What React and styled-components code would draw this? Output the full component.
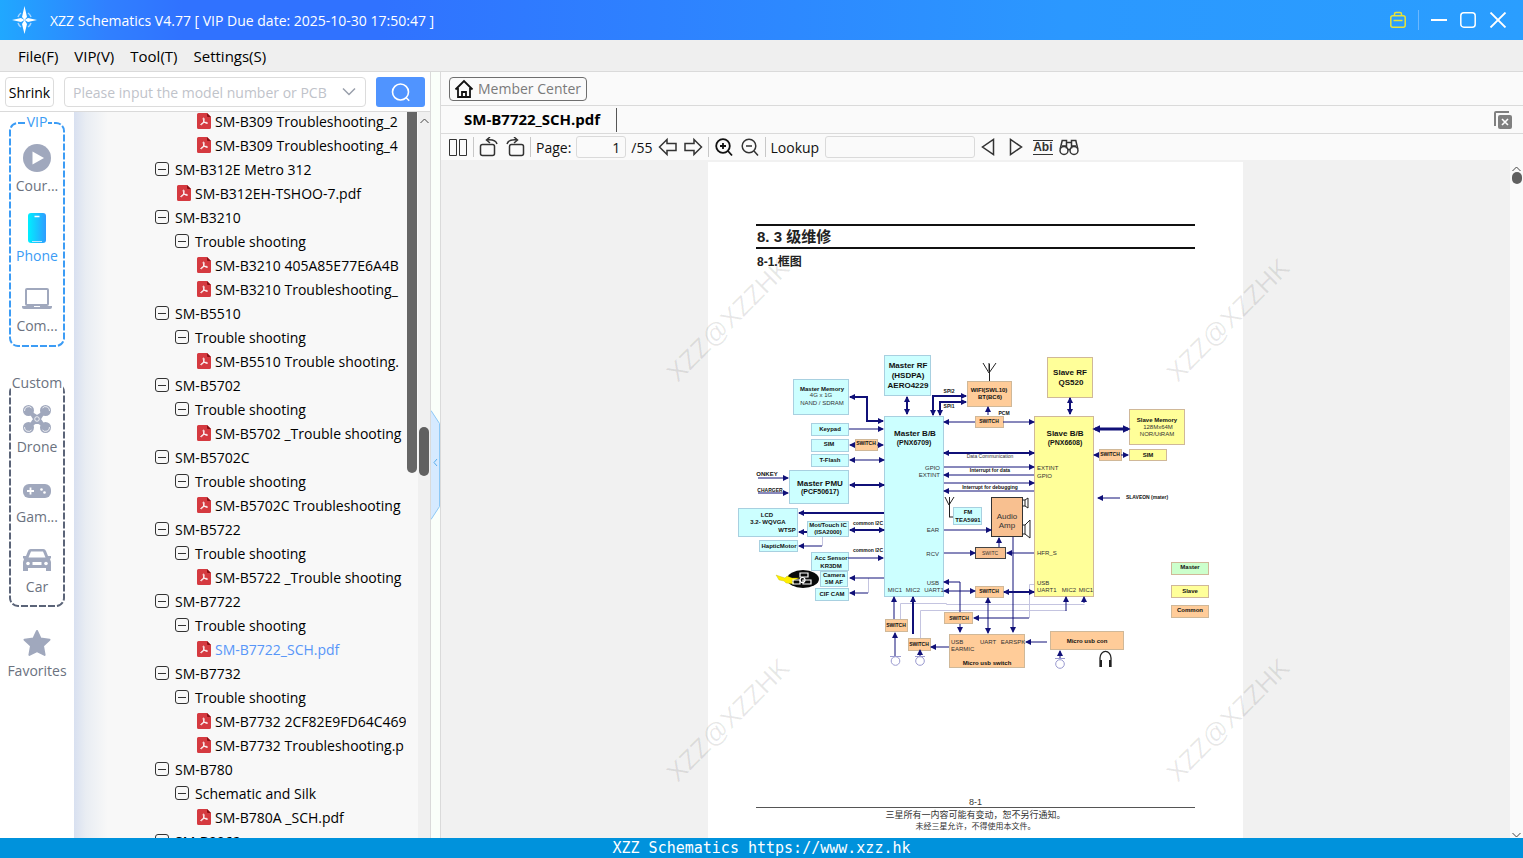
import { useState } from "react";

import styled, { createGlobalStyle } from "styled-components";


const GlobalStyle = createGlobalStyle`
	* { box-sizing:border-box; }
	body {
		margin:0;
		overflow:hidden;
		font-family:"Open Sans", "Noto Sans", "Noto Sans CJK SC", sans-serif;
		font-size:14px;
		color:#000;
		background:#fff;
	}
	button, input {
		font-family:inherit;
		font-size:inherit;
		color:inherit;
		margin:0;
	}
	button { cursor:pointer; }
	svg { display:block; flex:none; }
`;

const Window = styled.div`
	display:flex;
	flex-direction:column;
	height:100vh;
`;

const TitleBar = styled.header`
	display:flex;
	align-items:center;
	height:40px;
	flex:none;
	padding:0 16px 0 11px;
	color:#fff;
	background:linear-gradient(90deg, #20a8ff 0, #3080ff 7%, #3072ff 12%, #3072ff 25%, #2b98ff 70%, #2a9eff 100%);
`;

const Title = styled.h1`
	flex:1;
	margin:0 0 0 12px;
	font-size:14px;
	font-weight:400;
	white-space:nowrap;
`;

const WindowButtons = styled.div`
	display:flex;
	align-items:center;
	gap:12px;
`;

const WindowDivider = styled.span`
	width:1px;
	height:20px;
	background:#6bb8ff;
`;

const IconButton = styled.button`
	display:flex;
	align-items:center;
	justify-content:center;
	padding:0;
	border:none;
	background:none;
`;

const MenuBar = styled.nav`
	display:flex;
	align-items:center;
	gap:16px;
	height:32px;
	flex:none;
	padding:0 18px;
	background:#efefef;
	border-bottom:1px solid #dadada;
`;

const MenuItem = styled.button`
	padding:0;
	border:none;
	background:none;
	font-size:15px;
`;

const Main = styled.div`
	display:flex;
	flex:1;
	min-height:0;
`;

const LeftPanel = styled.div`
	display:flex;
	flex-direction:column;
	width:431px;
	flex:none;
	border-right:1px solid #dadada;
`;

const SearchRow = styled.form`
	display:flex;
	align-items:center;
	height:40px;
	flex:none;
	padding:0 5px;
	gap:10px;
	border-bottom:1px solid #dadada;
`;

const ShrinkButton = styled.button`
	width:49px;
	height:30px;
	padding:2px 0 0;
	border:1px solid #dcdcdc;
	border-radius:4px;
	background:#fff;
`;

const SearchBox = styled.div`
	display:flex;
	align-items:center;
	flex:1;
	height:30px;
	padding:0 9px 0 8px;
	border:1px solid #dcdcdc;
	border-radius:4px;
`;

const SearchInput = styled.input`
	flex:1;
	min-width:0;
	padding:2px 0 0;
	border:none;
	outline:none;
	background:none;
	&::placeholder { color:#bfc3ca; }
`;

const SearchButton = styled.button`
	display:flex;
	align-items:center;
	justify-content:center;
	width:49px;
	height:30px;
	padding:0;
	border:none;
	border-radius:3px;
	background:#5094ff;
`;

const LeftBody = styled.div`
	display:flex;
	flex:1;
	min-height:0;
`;

const SideBar = styled.div`
	display:flex;
	flex-direction:column;
	align-items:center;
	width:74px;
	flex:none;
	padding-top:10px;
`;

const SideGroup = styled.section`
	display:flex;
	flex-direction:column;
	align-items:center;
	position:relative;
	width:56px;
	height:225px;
	margin-bottom:${props => props.$gap}px;
	padding-top:12px;
	color:${props => props.$color};
`;

const SideFrame = styled.svg`
	position:absolute;
	inset:0;
	width:100%;
	height:100%;
`;

const SideLegend = styled.h2`
	position:absolute;
	top:-10px;
	margin:0;
	padding:0 1px;
	font-size:14px;
	font-weight:400;
	line-height:20px;
	background:#fff;
`;

const SideItem = styled.button`
	display:flex;
	flex-direction:column;
	align-items:center;
	gap:3px;
	height:70px;
	flex:none;
	padding:9px 0 0;
	border:none;
	background:none;
	position:relative;
	color:${props => props.$active ? "#3c9cf5" : "#6b7280"};
	line-height:20px;
`;

const TreePane = styled.div`
	flex:1;
	min-width:0;
	overflow:hidden;
	background:linear-gradient(90deg, #d8e0f0 0, #e9edf3 12px, #f8f8f8 34px);
`;

const Tree = styled.ul`
	margin:-3px 0 0;
	padding:0 0 0 81px;
	list-style:none;
`;

const TreeRow = styled.li`
	display:flex;
	align-items:center;
	height:24px;
	padding-left:${props => props.$level * 20}px;
	color:${props => props.$selected ? "#5796f8" : "#000"};
	white-space:nowrap;
`;

const TreeIcon = styled.span`
	display:flex;
	width:20px;
	flex:none;
	padding-left:${props => props.$file ? 2 : 0}px;
`;

const TreeName = styled.button`
	padding:0;
	border:none;
	background:none;
`;

const InnerScroll = styled.div`
	width:12px;
	padding-left:1px;
	flex:none;
	background:#f8f8f8;
`;

const InnerThumb = styled.div`
	width:10px;
	height:361px;
	border-radius:0 0 5px 5px;
	background:#666;
`;

const OuterScroll = styled.div`
	display:flex;
	flex-direction:column;
	align-items:center;
	gap:303px;
	width:12px;
	padding-top:6px;
	flex:none;
	background:#f0f0f0;
`;

const OuterThumb = styled.div`
	width:10px;
	height:49px;
	border-radius:5px;
	background:#606060;
`;

const Splitter = styled.div`
	display:flex;
	align-items:center;
	width:10px;
	flex:none;
	padding-top:20px;
	background:#fafffa;
	border-right:1px solid #dadada;
`;

const RightPanel = styled.div`
	display:flex;
	flex-direction:column;
	flex:1;
	min-width:0;
	background:#fafafa;
`;

const MemberRow = styled.div`
	display:flex;
	align-items:center;
	height:34px;
	flex:none;
	padding-left:8px;
	border-bottom:1px solid #dadada;
`;

const MemberButton = styled.button`
	display:flex;
	align-items:center;
	gap:4px;
	height:24px;
	padding:0 5px 0 4px;
	border:1px solid #6e6e6e;
	border-radius:4px;
	background:#fafafa;
	color:#7a7a7a;
`;

const TabRow = styled.div`
	display:flex;
	align-items:center;
	justify-content:space-between;
	height:28px;
	flex:none;
	padding-right:11px;
	border-bottom:1px solid #dadada;
`;

const Tab = styled.button`
	height:24px;
	padding:0 16px 2px 23px;
	border:none;
	border-right:1px solid #555;
	background:none;
	font-size:15px;
	font-weight:700;
`;

const ToolRow = styled.div`
	display:flex;
	align-items:center;
	height:26px;
	flex:none;
	padding-left:7px;
	color:#111;
`;

const ToolGroup = styled.div`
	display:flex;
	align-items:center;
	gap:${props => props.$gap}px;
`;

const ToolDivider = styled.span`
	width:1px;
	height:20px;
	margin:0 5px;
	background:#c8c8c8;
`;

const ToolInput = styled.input`
	width:${props => props.$width}px;
	height:22px;
	padding:0 5px;
	border:1px solid #dadada;
	border-radius:3px;
	background:#fafafa;
	text-align:right;
`;

const Abi = styled.span`
	border-top:1px solid #333;
	border-bottom:1px solid #333;
	font:700 12px/13px "Liberation Sans", Arial, sans-serif;
	color:#333;
`;

const Viewer = styled.div`
	display:flex;
	flex:1;
	min-height:0;
`;

const Canvas = styled.div`
	display:flex;
	justify-content:center;
	flex:1;
	padding-top:2px;
	overflow:hidden;
	background:#f1f1f1;
`;

const Page = styled.article`
	position:relative;
	width:535px;
	flex:none;
	padding:62px 48px 0;
	background:#fff;
	font-family:"Liberation Sans", "Noto Sans CJK SC", sans-serif;
`;

const PageHeading = styled.h2`
	margin:0;
	padding:0 1px;
	border-top:2px solid #111;
	border-bottom:2px solid #111;
	font-size:15px;
	line-height:21px;
	color:#222;
`;

const PageSubHeading = styled.h3`
	margin:4px 1px 0;
	font-size:12px;
	line-height:18px;
	color:#222;
`;

const Diagram = styled.svg`
	width:535px;
	margin:79px -48px 0;
	font-family:"Liberation Sans", Arial, sans-serif;
`;

const PageFooter = styled.footer`
	margin-top:117px;
	text-align:center;
	color:#333;
	font-size:9px;
	line-height:10px;
`;

const PageNotice = styled.p`
	margin:0;
	padding-top:1px;
	border-top:${props => props.$first ? "1px solid #555" : "none"};
	font-size:${props => props.$first ? 9 : 8}px;
	line-height:${props => props.$first ? 11 : 9}px;
	font-family:"Noto Sans CJK SC", sans-serif;
`;

/* laid over the page and the grey desk around it */
const Watermark = styled.span`
	position:absolute;
	left:${props => props.$x}px;
	top:${props => props.$y}px;
	width:180px;
	line-height:30px;
	margin:-15px 0 0 -90px;
	text-align:center;
	font-size:26px;
	color:rgba(0, 0, 0, .09);
	transform:rotate(-45deg);
	pointer-events:none;
`;

const ViewScroll = styled.div`
	display:flex;
	flex-direction:column;
	align-items:center;
	justify-content:space-between;
	width:13px;
	flex:none;
	padding:6px 0 0;
	background:#fafafa;
`;

const ViewThumb = styled.div`
	width:10px;
	height:12px;
	border-radius:5px;
	background:#606060;
`;

const StatusBar = styled.footer`
	height:20px;
	flex:none;
	background:#0092dc;
	color:#fff;
	text-align:center;
	font:15px/20px "DejaVu Sans Mono", monospace;
`;


const TREE = [
	[2, "pdf", "SM-B309 Troubleshooting_2"],
	[2, "pdf", "SM-B309 Troubleshooting_4"],
	[0, "dir", "SM-B312E Metro 312"],
	[1, "pdf", "SM-B312EH-TSHOO-7.pdf"],
	[0, "dir", "SM-B3210"],
	[1, "dir", "Trouble shooting"],
	[2, "pdf", "SM-B3210 405A85E77E6A4B"],
	[2, "pdf", "SM-B3210 Troubleshooting_"],
	[0, "dir", "SM-B5510"],
	[1, "dir", "Trouble shooting"],
	[2, "pdf", "SM-B5510 Trouble shooting."],
	[0, "dir", "SM-B5702"],
	[1, "dir", "Trouble shooting"],
	[2, "pdf", "SM-B5702 _Trouble shooting"],
	[0, "dir", "SM-B5702C"],
	[1, "dir", "Trouble shooting"],
	[2, "pdf", "SM-B5702C Troubleshooting"],
	[0, "dir", "SM-B5722"],
	[1, "dir", "Trouble shooting"],
	[2, "pdf", "SM-B5722 _Trouble shooting"],
	[0, "dir", "SM-B7722"],
	[1, "dir", "Trouble shooting"],
	[2, "pdf", "SM-B7722_SCH.pdf"],
	[0, "dir", "SM-B7732"],
	[1, "dir", "Trouble shooting"],
	[2, "pdf", "SM-B7732 2CF82E9FD64C469"],
	[2, "pdf", "SM-B7732 Troubleshooting.p"],
	[0, "dir", "SM-B780"],
	[1, "dir", "Schematic and Silk"],
	[2, "pdf", "SM-B780A _SCH.pdf"],
	[0, "dir", "SM-B9062"],
];

const CYAN = "#ccffff";
const YELLOW = "#ffff99";
const ORANGE = "#ffcc99";

// x, y, width, height, fill
const BOXES = [
	[884, 355, 46, 40, CYAN],
	[793, 379, 55, 35, CYAN],
	[811, 423, 37, 12, CYAN],
	[811, 439, 37, 12, CYAN],
	[811, 454, 37, 12, CYAN],
	[789, 470, 59, 33, CYAN],
	[738, 508, 59, 28, CYAN],
	[807, 521, 41, 15, CYAN],
	[759, 540, 38, 11, CYAN],
	[811, 552, 37, 18, CYAN],
	[820, 571, 27, 15, CYAN],
	[815, 588, 33, 12, CYAN],
	[884, 416, 59, 180, CYAN],
	[953, 507, 28, 17, CYAN],
	[1034, 416, 59, 180, YELLOW],
	[1047, 357, 45, 40, YELLOW],
	[1129, 409, 55, 35, YELLOW],
	[1129, 449, 37, 11, YELLOW],
	[855, 439, 22, 11, ORANGE],
	[1099, 449, 22, 11, ORANGE],
	[967, 381, 44, 25, ORANGE],
	[975, 416, 28, 11, ORANGE],
	[975, 586, 28, 11, ORANGE],
	[944, 612, 28, 11, ORANGE],
	[885, 619, 22, 12, ORANGE],
	[908, 638, 22, 12, ORANGE],
	[949, 634, 75, 33, ORANGE],
	[1050, 631, 73, 18, ORANGE],
	[1171, 562, 37, 12, "#ccffcc"],
	[1171, 585, 37, 12, YELLOW],
	[1171, 605, 37, 12, ORANGE],
];

// x, baseline, text, size, bold, anchor
const LABELS = [
	[908, 368, "Master RF", 8, 1],
	[908, 378, "(HSDPA)", 8, 1],
	[908, 388, "AERO4229", 8, 1],
	[822, 391, "Master Memory", 6, 1],
	[821, 397, "4G x 1G", 6, 0],
	[822, 405, "NAND / SDRAM", 6, 0],
	[830, 431, "Keypad", 6, 1],
	[829, 446, "SIM", 6, 1],
	[830, 462, "T-Flash", 6, 1],
	[866, 445, "SWITCH", 5, 1],
	[820, 486, "Master PMU", 8, 1],
	[820, 494, "(PCF50617)", 7, 1],
	[767, 517, "LCD", 6, 1],
	[768, 524, "3.2- WQVGA", 6, 1],
	[787, 532, "WTSP", 6, 1],
	[828, 527, "Mot/Touch IC", 6, 1],
	[828, 534, "(ISA2000)", 6, 1],
	[779, 548, "HapticMotor", 6, 1],
	[831, 560, "Acc Sensor", 6, 1],
	[831, 568, "KR3DM", 6, 1],
	[834, 577, "Camera", 6, 1],
	[834, 584, "5M AF", 6, 1],
	[832, 596, "CIF CAM", 6, 1],
	[868, 525, "common I2C", 5, 1],
	[868, 552, "common I2C", 5, 1],
	[767, 476, "ONKEY", 6, 1],
	[770, 492, "CHARGER", 5, 1],
	[915, 436, "Master B/B", 8, 1],
	[914, 445, "(PNX6709)", 7, 1],
	[940, 470, "GPIO", 6, 0, "end"],
	[940, 477, "EXTINT", 6, 0, "end"],
	[939, 532, "EAR", 6, 0, "end"],
	[939, 556, "RCV", 6, 0, "end"],
	[939, 585, "USB", 6, 0, "end"],
	[895, 592, "MIC1", 6, 0],
	[913, 592, "MIC2", 6, 0],
	[934, 592, "UART1", 6, 0],
	[949, 393, "SPI2", 5, 1],
	[949, 408, "SPI1", 5, 1],
	[989, 392, "WIFI(SWL10)", 6, 1],
	[990, 399, "BT(BC6)", 6, 1],
	[1004, 415, "PCM", 5, 1],
	[989, 423, "SWITCH", 5, 1],
	[990, 458, "Data Communication", 5, 0],
	[990, 472, "Interrupt for data", 5, 1],
	[990, 489, "Interrupt for debugging", 5, 1],
	[968, 514, "FM", 6, 1],
	[968, 522, "TEA5991", 6, 1],
	[1007, 519, "Audio", 8, 0],
	[1007, 528, "Amp", 8, 0],
	[990, 555, "SWITC", 5, 0],
	[989, 593, "SWITCH", 5, 1],
	[959, 620, "SWITCH", 5, 1],
	[896, 627, "SWITCH", 5, 1],
	[919, 646, "SWITCH", 5, 1],
	[1070, 375, "Slave RF", 8, 1],
	[1071, 385, "QS520", 8, 1],
	[1065, 436, "Slave B/B", 8, 1],
	[1065, 445, "(PNX6608)", 7, 1],
	[1037, 470, "EXTINT", 6, 0, "start"],
	[1037, 478, "GPIO", 6, 0, "start"],
	[1037, 555, "HFR_S", 6, 0, "start"],
	[1037, 585, "USB", 6, 0, "start"],
	[1037, 592, "UART1", 6, 0, "start"],
	[1069, 592, "MIC2", 6, 0],
	[1086, 592, "MIC1", 6, 0],
	[1157, 422, "Slave Memory", 6, 1],
	[1158, 429, "128Mx64M", 6, 0],
	[1157, 436, "NOR/UtRAM", 6, 0],
	[1110, 456, "SWITCH", 5, 1],
	[1148, 457, "SIM", 6, 1],
	[1147, 499, "SLAVEON (mater)", 5, 1],
	[951, 644, "USB", 6, 0, "start"],
	[951, 651, "EARMIC", 6, 0, "start"],
	[988, 644, "UART", 6, 0],
	[1013, 644, "EARSPK", 6, 0],
	[987, 665, "Micro usb switch", 6, 1],
	[1087, 643, "Micro usb con", 6, 1],
	[1190, 569, "Master", 6, 1],
	[1190, 593, "Slave", 6, 1],
	[1190, 612, "Common", 6, 1],
];

// points, heads (s = start, e = end), stroke width
const WIRES = [
	["907,397 907,414", "se", 2],
	["850,397 867,397 867,421 883,421", "se", 2],
	["849,429 883,429", "e", 1],
	["850,445 855,445", "s", 1],
	["877,445 883,445", "e", 1],
	["850,460 884,460", "se", 1],
	["758,478 788,478", "e", 1],
	["758,493 788,493", "e", 1],
	["850,485 884,485", "se", 2],
	["799,513 884,513", "s", 2],
	["799,532 807,532", "s", 2],
	["850,530 884,530", "se", 2],
	["799,546 822,546", "s", 1],
	["848,558 883,558", "e", 1],
	["850,578 884,578", "s", 1],
	["850,593 868,593", "s", 1],
	["933,415 933,396 966,396", "se", 2],
	["940,415 940,402 966,402", "se", 2],
	["988,415 988,407", "e", 1],
	["944,422 975,422", "s", 1],
	["1003,422 1034,422", "e", 1],
	["944,453 1034,453", "se", 2],
	["944,467 1034,467", "e", 1],
	["944,475 1034,475", "s", 1],
	["944,483 1034,483", "e", 1],
	["944,491 1034,491", "s", 1],
	["944,530 991,530", "e", 1],
	["944,553 975,553", "e", 1],
	["1007,553 1034,553", "s", 1],
	["999,547 999,538", "e", 1],
	["1013,537 1013,632", "e", 1],
	["944,582 960,582 960,612", "s", 1],
	["960,624 960,632", "e", 1],
	["944,591 975,591", "se", 1],
	["1004,592 1034,592", "se", 2],
	["988,598 988,633", "se", 1],
	["974,618 1029,618", "s", 1],
	["1026,642 1047,642", "s", 1],
	["931,647 949,647", "s", 1],
	["894,619 894,597", "e", 1],
	["913,634 913,597", "e", 2],
	["895,656 895,633", "e", 1],
	["920,656 920,650", "e", 1],
	["1070,398 1070,414", "se", 2],
	["1095,429 1128,429", "se", 3],
	["1094,455 1099,455", "s", 1],
	["1121,455 1128,455", "e", 1],
	["1098,498 1120,498", "s", 1],
	["1066,611 1066,597", "e", 1],
	["1084,603 1084,597", "e", 1],
	["1060,658 1060,651", "e", 1],
];

const BlockDiagram = () => (
	<Diagram viewBox="708 350 535 330" role="img" aria-label="Block diagram">
		<defs>
			<marker id="head" viewBox="0 0 6 6" refX="5" refY="3" markerWidth="6" markerHeight="6" markerUnits="userSpaceOnUse" orient="auto-start-reverse">
				<path d="M0 0 6 3 0 6z" fill="#101078" />
			</marker>
			<marker id="bighead" viewBox="0 0 6 6" refX="4" refY="3" markerWidth="8" markerHeight="8" markerUnits="userSpaceOnUse" orient="auto-start-reverse">
				<path d="M0 0 6 3 0 6z" fill="#101078" />
			</marker>
		</defs>
		<g fill="none" stroke="#c4c4e0" strokeWidth="1">
			<path d="M868.500 578v15M822.500 537v9M900.500 619v-15.500h46v1h138M920.500 638v-27.500h146M1029.500 618v-33.500h5" />
		</g>
		{BOXES.map(([x, y, w, h, fill]) => (
			<rect key={x + "-" + y} x={x + .5} y={y + .5} width={w} height={h} fill={fill} stroke={fill === CYAN ? "#a8d0e0" : "#d0b898"} />
		))}
		<rect x="991.5" y="497.5" width="31" height="39" fill="#f8c090" stroke="#333" />
		<rect x="975.5" y="547.5" width="30" height="11" fill="#f8c090" stroke="#444" />
		{WIRES.map(([points, heads, width]) => (
			<polyline
				key={points}
				points={points}
				fill="none"
				stroke="#101078"
				strokeWidth={width}
				markerStart={heads.includes("s") ? `url(#${width > 2 ? "bighead" : "head"})` : undefined}
				markerEnd={heads.includes("e") ? `url(#${width > 2 ? "bighead" : "head"})` : undefined}
			/>
		))}
		<g fill="none" stroke="#222" strokeWidth="1">
			<path d="M989.500 381v-17M983 363l6 10 7-10M989 363v8M949.500 517v-20M945 497l4 8 5-8M949 517h4" />
			<path d="M1022 500h3v6h-3M1025 500l3-2v10l-3-2M1022 525h3v9h-3M1025 525l5-5v18l-5-4" />
			<path d="M1100 667v-9a5 6 0 0 1 11 0v9" strokeWidth="1.300" />
			<path d="M1101 660v7M1110 660v7" strokeWidth="2" />
		</g>
		<g fill="#fff" stroke="#9a9ad0" strokeWidth="1">
			<path d="M890 656.500h11M915 656.500h10M1055 658.500h10" />
			<circle cx="895.500" cy="661" r="4.300" />
			<circle cx="920" cy="661" r="4.300" />
			<circle cx="1060" cy="664" r="4.300" />
		</g>
		<ellipse cx="803" cy="579" rx="16" ry="9" fill="#0a0a0a" />
		<path d="M776 575l9 3 2-2 5 2 7 0-7 3 2 3-8-1-2-2-5-1z" fill="#ffee00" stroke="#aa0" strokeWidth=".3" />
		<g fill="none" stroke="#fff" strokeWidth="1.200">
			<path d="M800 573h8v4h-8zM793 580h7v4h-7zM803 580h8v4h-8z" />
			<circle cx="802.500" cy="580" r="2.500" />
		</g>
		{LABELS.map(([x, y, text, size, bold, anchor]) => (
			<text key={x + "-" + y} x={x} y={y} fontSize={size} fontWeight={bold ? 700 : 400} textAnchor={anchor || "middle"} fill={bold ? "#111" : "#333"}>{text}</text>
		))}
	</Diagram>
);

const Logo = () => (
	<svg width="27" height="30" viewBox="0 0 27 30">
		<path d="M13.500 1l2.500 11-2.500 3-2.500-3zM13.500 29l2.500-10-2.500-4-2.500 4z" fill="#fff" />
		<path d="M1 15l9-2 3.500 2-3.500 2zM26 15l-9-2-3.500 2 3.500 2z" fill="#fff" />
		<path d="M7 12a8 8 0 0 1 3-4M17 8a8 8 0 0 1 3 4M20 18a8 8 0 0 1-3 4M10 22a8 8 0 0 1-3-4" fill="none" stroke="#a9d6ff" strokeWidth="1.500" />
	</svg>
);

const PdfIcon = () => (
	<svg width="14" height="16" viewBox="0 0 14 16">
		<path d="M1.500 0H10l4 4v10.500a1.500 1.500 0 0 1-1.500 1.500h-11A1.500 1.500 0 0 1 0 14.500v-13A1.500 1.500 0 0 1 1.500 0z" fill="#d53a40" />
		<path d="M10 0l4 4h-3a1 1 0 0 1-1-1z" fill="#8a1014" />
		<path d="M6.500 5c1 0 .8 2 0 4-.7 1.500-1.700 3-2.500 3-.8-.6.500-1.800 2.500-2.300 1.800-.5 3.800-.6 4 .2.200 1-2.200.5-3.200-1-.9-1.500-1.500-3.900-.8-3.900z" fill="none" stroke="#fff" strokeWidth="1" />
	</svg>
);

const FolderIcon = () => (
	<svg width="14" height="14" viewBox="0 0 14 14" fill="none" stroke="#333">
		<rect x=".5" y=".5" width="13" height="13" rx="2.500" />
		<path d="M3 7.500h8" />
	</svg>
);

const Up = () => (
	<svg width="9" height="6" viewBox="0 0 9 6" fill="none" stroke="#444"><path d="M.5 5l4-4 4 4" /></svg>
);

const SIDE_ICONS = {
	play: (
		<g>
			<circle cx="15" cy="15" r="14" fill="#a0a8bd" />
			<path d="M10.500 8.500v13L22 15z" fill="#fff" />
		</g>
	),
	phone: (
		<g>
			<defs>
				<linearGradient id="phone"><stop stopColor="#00efff" /><stop offset="1" stopColor="#2f9cff" /></linearGradient>
			</defs>
			<rect x="6" width="18" height="30" rx="3" fill="url(#phone)" />
			<path d="M12.500 3.500h5" stroke="#fff" strokeWidth="1.500" />
			<path d="M10 28.500h10" stroke="#bfe8ff" />
		</g>
	),
	laptop: (
		<g>
			<rect x="4" y="6" width="22" height="16" rx="1" fill="none" stroke="#a0a8bd" strokeWidth="2" />
			<path d="M0 23h30v1a2 2 0 0 1-2 2H2a2 2 0 0 1-2-2z" fill="#a0a8bd" />
			<path d="M12 23.500h6" stroke="#fff" />
		</g>
	),
	drone: (
		<g transform="translate(1 1)">
			<path d="M6 6l8 5 8-5-5 8 5 8-8-5-8 5 5-8z" fill="#a0a8bd" stroke="#a0a8bd" strokeWidth="2" strokeLinejoin="round" />
			<g fill="#a0a8bd"><circle cx="5.500" cy="5.500" r="5.500" /><circle cx="22.500" cy="5.500" r="5.500" /><circle cx="5.500" cy="22.500" r="5.500" /><circle cx="22.500" cy="22.500" r="5.500" /></g>
			<g fill="none" stroke="#fff" strokeWidth=".8">
				<path d="M1.500 6a4 4 0 0 1 7-3M26.500 6a4 4 0 0 0-7-3M1.500 22a4 4 0 0 0 7 3M26.500 22a4 4 0 0 1-7 3" />
				<circle cx="14" cy="14" r="2.300" />
			</g>
		</g>
	),
	game: (
		<g>
			<rect x="1" y="10" width="28" height="14" rx="6" fill="#a0a8bd" />
			<path d="M5 17h7M8.500 13.500v7" stroke="#fff" strokeWidth="1.800" />
			<g fill="#fff"><circle cx="19.500" cy="15.500" r="1.300" /><circle cx="22.500" cy="18.500" r="1.300" /></g>
		</g>
	),
	car: (
		<g transform="translate(1 2)">
			<path d="M8 3h12a3 3 0 0 1 3 2l2 5h3v2l-1 1 1 3v9h-5v-3H5v3H0v-9l1-3-1-1v-2h3l2-5a3 3 0 0 1 3-2z" fill="#a0a8bd" />
			<path d="M8 5.500h12l2.500 6h-17zM9.500 16h9v3h-9z" fill="#fff" />
			<circle cx="5" cy="17.500" r="1.800" fill="#fff" /><circle cx="23" cy="17.500" r="1.800" fill="#fff" />
		</g>
	),
	star: (
		<g transform="translate(1 1)">
			<path d="M14 2l3.500 7.500 9 1.200-6.500 6.200 1.600 9L14 22l-7.600 3.900 1.600-9-6.500-6.200 9-1.200z" fill="#a0a8bd" stroke="#a0a8bd" strokeWidth="2" strokeLinejoin="round" />
		</g>
	),
};

const SideEntry = ({ icon, label, active }) => (
	<SideItem type="button" $active={active}>
		<svg width="30" height="30" viewBox="0 0 30 30">{SIDE_ICONS[icon]}</svg>
		{label}
	</SideItem>
);

const Tool = ({ label, children }) => (
	<IconButton type="button" aria-label={label}>
		<svg width="20" height="20" viewBox="0 0 20 20" fill="none" stroke="#333" strokeWidth="1.500">{children}</svg>
	</IconButton>
);


const App = () => {

	const [Search, setSearch] = useState("");

	const [PageNumber, setPageNumber] = useState("1");

	const [Lookup, setLookup] = useState("");

	const [Selected, setSelected] = useState("SM-B7722_SCH.pdf");

	return (
		<Window>
			<GlobalStyle/>
			<TitleBar>
				<Logo/>
				<Title>XZZ Schematics V4.77 [ VIP Due date: 2025-10-30 17:50:47 ]</Title>
				<WindowButtons>
					<IconButton type="button" aria-label="Shop">
						<svg width="16" height="18" viewBox="0 0 16 18" fill="none" stroke="#e8e337" strokeWidth="1.500">
							<rect x=".8" y="4.800" width="14.400" height="11.400" rx="2" />
							<path d="M4.500 4.500V3a1.500 1.500 0 0 1 1.500-1.500h4A1.500 1.500 0 0 1 11.500 3v1.500M3.500 9.500h9" />
						</svg>
					</IconButton>
					<WindowDivider/>
					<IconButton type="button" aria-label="Minimize">
						<svg width="16" height="16" viewBox="0 0 16 16" stroke="#fff" strokeWidth="2"><path d="M0 8h16" /></svg>
					</IconButton>
					<IconButton type="button" aria-label="Maximize">
						<svg width="18" height="16" viewBox="0 0 18 16" fill="none" stroke="#fff" strokeWidth="1.500"><rect x="1.800" y=".8" width="14.400" height="14.400" rx="3" /></svg>
					</IconButton>
					<IconButton type="button" aria-label="Close">
						<svg width="18" height="16" viewBox="0 0 18 16" stroke="#fff" strokeWidth="1.800"><path d="M1.500.5l15 15M16.500.5l-15 15" /></svg>
					</IconButton>
				</WindowButtons>
			</TitleBar>
			<MenuBar>
				<MenuItem type="button">File(F)</MenuItem>
				<MenuItem type="button">VIP(V)</MenuItem>
				<MenuItem type="button">Tool(T)</MenuItem>
				<MenuItem type="button">Settings(S)</MenuItem>
			</MenuBar>
			<Main>
				<LeftPanel>
					<SearchRow onSubmit={(event) => event.preventDefault()}>
						<ShrinkButton type="button">Shrink</ShrinkButton>
						<SearchBox>
							<SearchInput
								type="text"
								aria-label="Model number"
								placeholder="Please input the model number or PCB"
								value={Search}
								onChange={(event) => setSearch(event.target.value)}
							/>
							<IconButton type="button" aria-label="History">
								<svg width="14" height="10" viewBox="0 0 14 10" fill="none" stroke="#999fab" strokeWidth="1.500"><path d="M1 1.500l6 6 6-6" /></svg>
							</IconButton>
						</SearchBox>
						<SearchButton type="submit" aria-label="Search">
							<svg width="20" height="20" viewBox="0 0 20 20" fill="none" stroke="#fff" strokeWidth="1.600"><circle cx="9.500" cy="10" r="8" /><path d="M15.200 15.700l3 3" /></svg>
						</SearchButton>
					</SearchRow>
					<LeftBody>
						<SideBar>
							<SideGroup $color="#3c9cf5" $gap={36}>
								<SideFrame><rect x="1" y="1" width="54" height="223" rx="8" fill="none" stroke="#3c9cf5" strokeWidth="2" strokeDasharray="7 2" /></SideFrame>
								<SideLegend>VIP</SideLegend>
								<SideEntry icon="play" label="Cour..."/>
								<SideEntry icon="phone" label="Phone" active/>
								<SideEntry icon="laptop" label="Com..."/>
							</SideGroup>
							<SideGroup $color="#6b7280" $gap={11}>
								<SideFrame><rect x="1" y="1" width="54" height="222" rx="8" fill="none" stroke="#5b6478" strokeWidth="2" strokeDasharray="7 2" /></SideFrame>
								<SideLegend>Custom</SideLegend>
								<SideEntry icon="drone" label="Drone"/>
								<SideEntry icon="game" label="Gam..."/>
								<SideEntry icon="car" label="Car"/>
							</SideGroup>
							<SideEntry icon="star" label="Favorites"/>
						</SideBar>
						<TreePane>
							<Tree>
								{TREE.map(([level, kind, name], index) => (
									<TreeRow key={index} $level={level} $selected={name === Selected}>
										<TreeIcon $file={kind === "pdf"}>{kind === "pdf" ? <PdfIcon/> : <FolderIcon/>}</TreeIcon>
										<TreeName type="button" onClick={() => kind === "pdf" && setSelected(name)}>{name}</TreeName>
									</TreeRow>
								))}
							</Tree>
						</TreePane>
						<InnerScroll><InnerThumb/></InnerScroll>
						<OuterScroll><Up/><OuterThumb/></OuterScroll>
					</LeftBody>
				</LeftPanel>
				<Splitter>
					<IconButton type="button" aria-label="Collapse">
						<svg width="9" height="110" viewBox="0 0 9 110"><path d="M0 .5l8.500 13v83L0 109.500" fill="#d6eaff" stroke="#8cc8f5" /><path d="M6 49l-3 3.500 3 3.500" fill="none" stroke="#5aaeee" /></svg>
					</IconButton>
				</Splitter>
				<RightPanel>
					<MemberRow>
						<MemberButton type="button">
							<svg width="20" height="20" viewBox="0 0 20 20" fill="none" stroke="#111" strokeWidth="1.800"><path d="M1.500 10.500L10 2l8.500 8.500M4 9v9h12V9M8 18v-5h4v5" /></svg>
							Member Center
						</MemberButton>
					</MemberRow>
					<TabRow>
						<Tab type="button">SM-B7722_SCH.pdf</Tab>
						<IconButton type="button" aria-label="Close all">
							<svg width="18" height="18" viewBox="0 0 18 18"><path d="M1 15V2a1 1 0 0 1 1-1h13" fill="none" stroke="#808080" strokeWidth="2" /><rect x="4" y="4" width="14" height="14" rx="2" fill="#808080" /><path d="M8 8l6 6M14 8l-6 6" stroke="#fff" strokeWidth="1.600" /></svg>
						</IconButton>
					</TabRow>
					<ToolRow>
						<Tool label="Two pages"><path d="M1.500 2.500h7v16h-7zM11.500 2.500h7v16h-7z" strokeWidth="1" /></Tool>
						<ToolDivider/>
						<ToolGroup $gap={6}>
							<Tool label="Rotate left"><rect x="1.500" y="7.500" width="14" height="11" rx="2" /><path d="M18 7c-1-3.500-5-4.500-10-4M11 0L7.500 3l3.500 3" /></Tool>
							<Tool label="Rotate right"><rect x="4.500" y="7.500" width="14" height="11" rx="2" /><path d="M2 7c1-3.500 5-4.500 10-4M9 0l3.500 3L9 6" /></Tool>
						</ToolGroup>
						<ToolDivider/>
						<ToolGroup $gap={5}>
							<label htmlFor="page">Page:</label>
							<ToolInput id="page" $width={50} value={PageNumber} onChange={(event) => setPageNumber(event.target.value)}/>
							<span>/55</span>
							<Tool label="Previous page"><path d="M1.500 10L9 2.500v4h9v7H9v4z" /></Tool>
							<Tool label="Next page"><path d="M18.500 10L11 2.500v4H2v7h9v4z" /></Tool>
						</ToolGroup>
						<ToolDivider/>
						<ToolGroup $gap={6}>
							<Tool label="Zoom in"><g stroke="#111" strokeWidth="1.800"><circle cx="9" cy="9" r="6.800" /><path d="M14 14l4 4.500M6 9h6M9 6v6" /></g></Tool>
							<Tool label="Zoom out"><circle cx="9" cy="9" r="6.800" /><path d="M14 14l4 4.500M6 9h6" /></Tool>
						</ToolGroup>
						<ToolDivider/>
						<ToolGroup $gap={6}>
							<label htmlFor="lookup">Lookup</label>
							<ToolInput id="lookup" $width={150} value={Lookup} onChange={(event) => setLookup(event.target.value)}/>
							<Tool label="Find previous"><path d="M12.500 2.500v15L1.500 10z" /></Tool>
							<Tool label="Find next"><path d="M3.500 2.500v15L14.500 10z" /></Tool>
							<IconButton type="button"><Abi>Abi</Abi></IconButton>
							<Tool label="Search document"><circle cx="5" cy="13.500" r="4" /><circle cx="15" cy="13.500" r="4" /><path d="M1.200 12l2-8.500h4.300v8M18.800 12l-2-8.500h-4.300v8M7.500 5.500h5M8.500 12.500h3M3 9h4.500M17 9h-4.500" /></Tool>
						</ToolGroup>
					</ToolRow>
					<Viewer>
						<Canvas>
							<Page>
								<PageHeading>8. 3 级维修</PageHeading>
								<PageSubHeading>8-1.框图</PageSubHeading>
								<BlockDiagram/>
								<PageFooter>
									8-1
									<PageNotice $first>三星所有一内容可能有变动，恕不另行通知。</PageNotice>
									<PageNotice>未经三星允许，不得使用本文件。</PageNotice>
								</PageFooter>
								<Watermark $x={20} $y={158}>XZZ@XZZHK</Watermark>
								<Watermark $x={520} $y={158}>XZZ@XZZHK</Watermark>
								<Watermark $x={20} $y={558}>XZZ@XZZHK</Watermark>
								<Watermark $x={520} $y={558}>XZZ@XZZHK</Watermark>
							</Page>
						</Canvas>
						<ViewScroll>
							<div><Up/><ViewThumb/></div>
							<svg width="9" height="5" viewBox="0 0 9 5" fill="none" stroke="#444"><path d="M.5 0l4 4 4-4" /></svg>
						</ViewScroll>
					</Viewer>
				</RightPanel>
			</Main>
			<StatusBar>XZZ Schematics https://www.xzz.hk</StatusBar>
		</Window>
	);
}


export default App;
